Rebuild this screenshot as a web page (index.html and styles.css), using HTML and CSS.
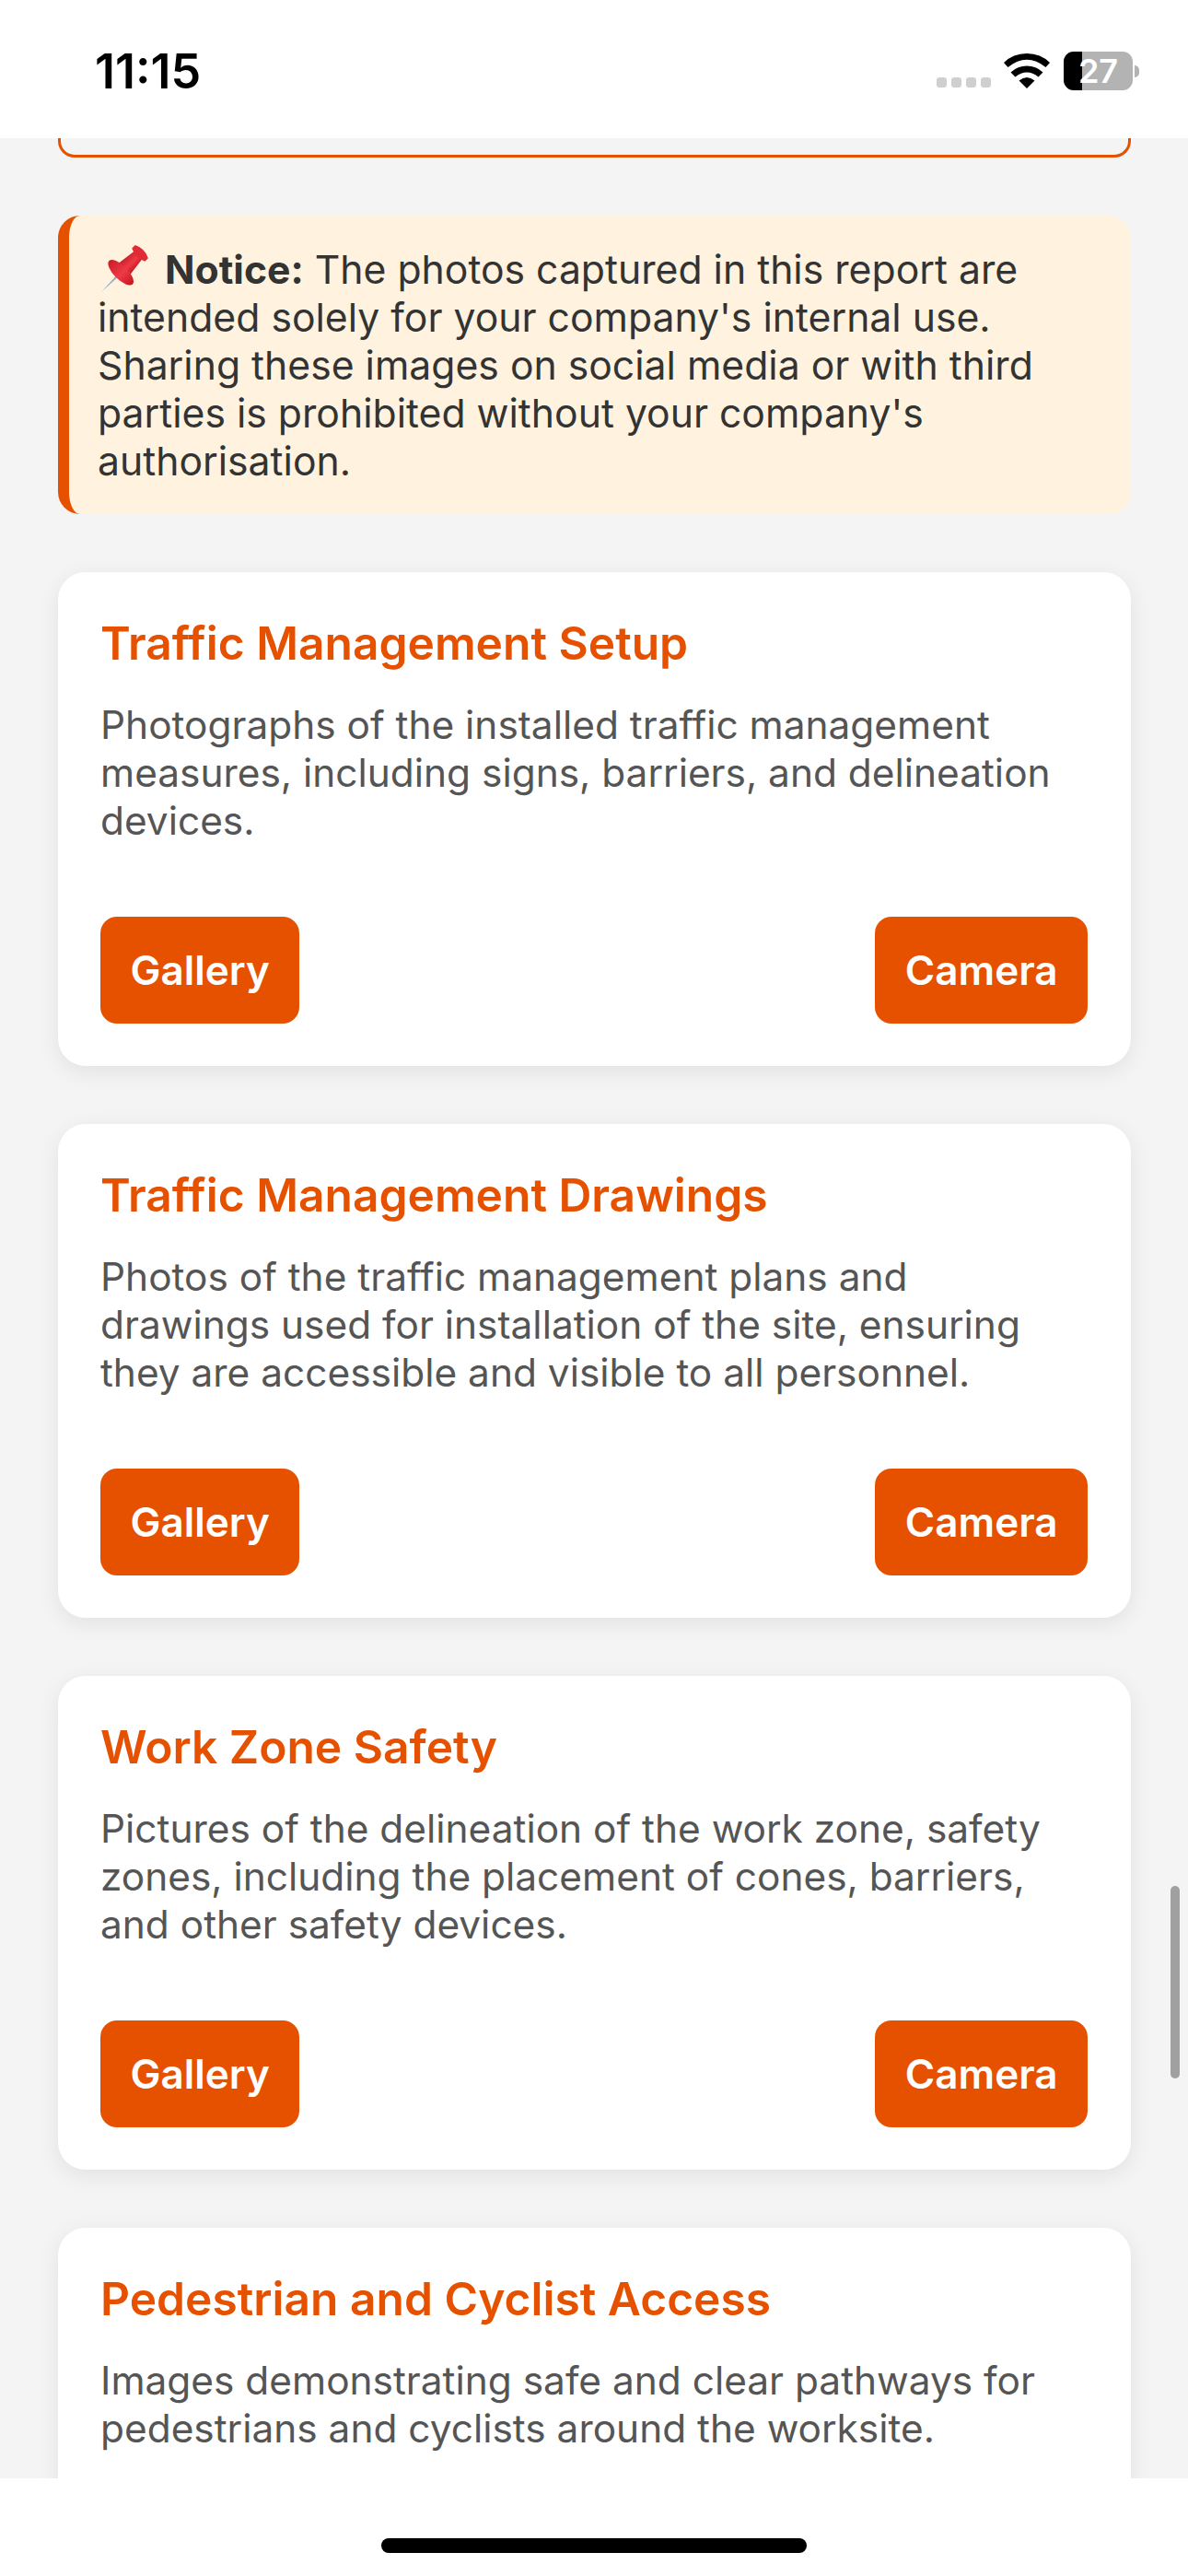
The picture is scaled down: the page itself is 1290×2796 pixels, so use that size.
FILE: index.html
```html
<!DOCTYPE html>
<html lang="en">
<head>
<meta charset="utf-8">
<title>Photo report</title>
<link rel="stylesheet" href="styles.css">
</head>
<body>
<div class="screen">
  <header class="status">
    <span class="time">11:15</span>
    <div class="status-icons">
      <div class="signal"><i></i><i></i><i></i><i></i></div>
      <svg class="wifi" viewBox="0 0 50 38" aria-hidden="true">
        <path d="M25 38 L16.5 29.5 Q25 22.5 33.5 29.5 Z"/>
        <path d="M25 13.5 Q35 13.5 42.5 20.5 L37.5 25.5 Q25 15.5 12.5 25.5 L7.5 20.5 Q15 13.5 25 13.5 Z"/>
        <path d="M25 0 Q40 0 50 10 L45.5 15 Q25 -1.5 4.5 15 L0 10 Q10 0 25 0 Z"/>
      </svg>
      <div class="battery"><span class="battery-level"></span><span class="battery-text">27</span></div>
      <span class="battery-nub"></span>
    </div>
  </header>

  <main class="content">
    <div class="prev-card"></div>

    <aside class="notice">
      <svg class="pin" viewBox="0 0 55 55" aria-hidden="true">
        <defs>
          <linearGradient id="red" x1="0" x2="1" y1="0" y2="0">
            <stop offset="0" stop-color="#c81e28"/>
            <stop offset=".55" stop-color="#ee3a45"/>
            <stop offset="1" stop-color="#c4161f"/>
          </linearGradient>
        </defs>
        <g transform="translate(4 52) rotate(45)">
          <path d="M-1.2 -24 L1.2 -24 L0 0 Z" fill="#8fb0cc"/>
          <path d="M-6 -57 L6 -57 L9 -34 L-9 -34 Z" fill="url(#red)"/>
          <ellipse cx="0" cy="-30" rx="18" ry="7.5" fill="url(#red)"/>
          <path d="M-10 -62 Q0 -67 10 -62 L10 -57 Q0 -52 -10 -57 Z" fill="#e02a35"/>
        </g>
      </svg><strong>Notice:</strong> The photos captured in this report are intended solely for your company's internal use. Sharing these images on social media or with third parties is prohibited without your company's authorisation.
    </aside>

    <section class="card">
      <h2>Traffic Management Setup</h2>
      <p>Photographs of the installed traffic management measures, including signs, barriers, and delineation devices.</p>
      <div class="actions"><button class="btn">Gallery</button><button class="btn">Camera</button></div>
    </section>

    <section class="card">
      <h2>Traffic Management Drawings</h2>
      <p>Photos of the traffic management plans and drawings used for installation of the site, ensuring they are accessible and visible to all personnel.</p>
      <div class="actions"><button class="btn">Gallery</button><button class="btn">Camera</button></div>
    </section>

    <section class="card">
      <h2>Work Zone Safety</h2>
      <p>Pictures of the delineation of the work zone, safety zones, including the placement of cones, barriers, and other safety devices.</p>
      <div class="actions"><button class="btn">Gallery</button><button class="btn">Camera</button></div>
    </section>

    <section class="card">
      <h2>Pedestrian and Cyclist Access</h2>
      <p>Images demonstrating safe and clear pathways for pedestrians and cyclists around the worksite.</p>
    </section>

    <div class="scrollbar"></div>
  </main>

  <footer class="home"><span class="home-bar"></span></footer>
</div>
</body>
</html>
```

FILE: styles.css
```css
* { box-sizing: border-box; }
html, body { margin: 0; padding: 0; }
body { font-family: "Inter", "Liberation Sans", sans-serif; background: #fff; }

.screen {
  width: 1290px;
  height: 2796px;
  display: flex;
  flex-direction: column;
  overflow: hidden;
}

.status {
  height: 150px;
  flex: none;
  background: #fff;
  display: flex;
  justify-content: space-between;
  align-items: flex-start;
  padding: 47px 53px 0 103px;
}
.time { font-size: 52px; font-weight: 600; line-height: 62px; color: #000; }
.status-icons { display: flex; align-items: flex-start; padding-top: 9px; }
.signal { display: flex; gap: 5px; margin-top: 28px; margin-right: 14px; }
.signal i { width: 11px; height: 11px; border-radius: 3px; background: #cfcfcf; display: block; }
.wifi { width: 50px; height: 38px; margin-top: 2px; margin-right: 15px; fill: #000; display: block; }
.battery {
  position: relative;
  width: 75px;
  height: 42px;
  border-radius: 11px;
  background: #b3b3b3;
  overflow: hidden;
  color: #fff;
  font-size: 36px;
  font-weight: 600;
  line-height: 42px;
  text-align: center;
}
.battery-level { position: absolute; left: 0; top: 0; bottom: 0; width: 20px; background: #000; }
.battery-text { position: relative; }
.battery-nub {
  width: 5px;
  height: 13px;
  margin: 15px 0 0 2px;
  background: #b3b3b3;
  border-radius: 0 6px 6px 0;
}

.content {
  position: relative;
  flex: 1;
  min-height: 0;
  overflow: hidden;
  background: #f4f4f4;
  display: flex;
  flex-direction: column;
  gap: 63px;
  padding: 0 62px 0 63px;
}
.prev-card {
  flex: none;
  height: 21px;
  border: 3px solid #e65100;
  border-top: 0;
  border-radius: 0 0 18px 18px;
}

.notice {
  flex: none;
  height: 324px;
  background: #fff3e0;
  border-left: 12px solid #e65100;
  border-radius: 24px;
  padding: 33px 33px 0 31px;
  font-size: 42.7px;
  line-height: 52px;
  color: #333;
}
.notice strong { font-weight: 700; }
.pin { width: 55px; height: 55px; vertical-align: -6px; margin: -9px 18px -6px 0; }

.card {
  flex: none;
  height: 536px;
  background: #fff;
  border-radius: 30px;
  padding: 47px 47px 46px 46px;
  box-shadow: 0 6px 24px rgba(0, 0, 0, .08);
  display: flex;
  flex-direction: column;
}
.card h2 { margin: 0 0 33px; font-size: 49.7px; line-height: 60px; font-weight: 600; color: #e65100; }
.card p { margin: 0; font-size: 42.4px; line-height: 52px; color: #555; }
.actions { margin-top: auto; display: flex; justify-content: space-between; }
.btn {
  height: 116px;
  padding: 0 32.5px;
  border: 0;
  border-radius: 18px;
  background: #e65100;
  color: #fff;
  font: 600 44px "Inter", "Liberation Sans", sans-serif;
}

.scrollbar {
  position: absolute;
  left: 1271px;
  top: 1897px;
  width: 10px;
  height: 209px;
  border-radius: 5px;
  background: #a0a0a0;
}

.home {
  height: 106px;
  flex: none;
  background: #fff;
  display: flex;
  justify-content: center;
  padding-top: 65px;
}
.home-bar { width: 462px; height: 16px; border-radius: 8px; background: #000; }
```
